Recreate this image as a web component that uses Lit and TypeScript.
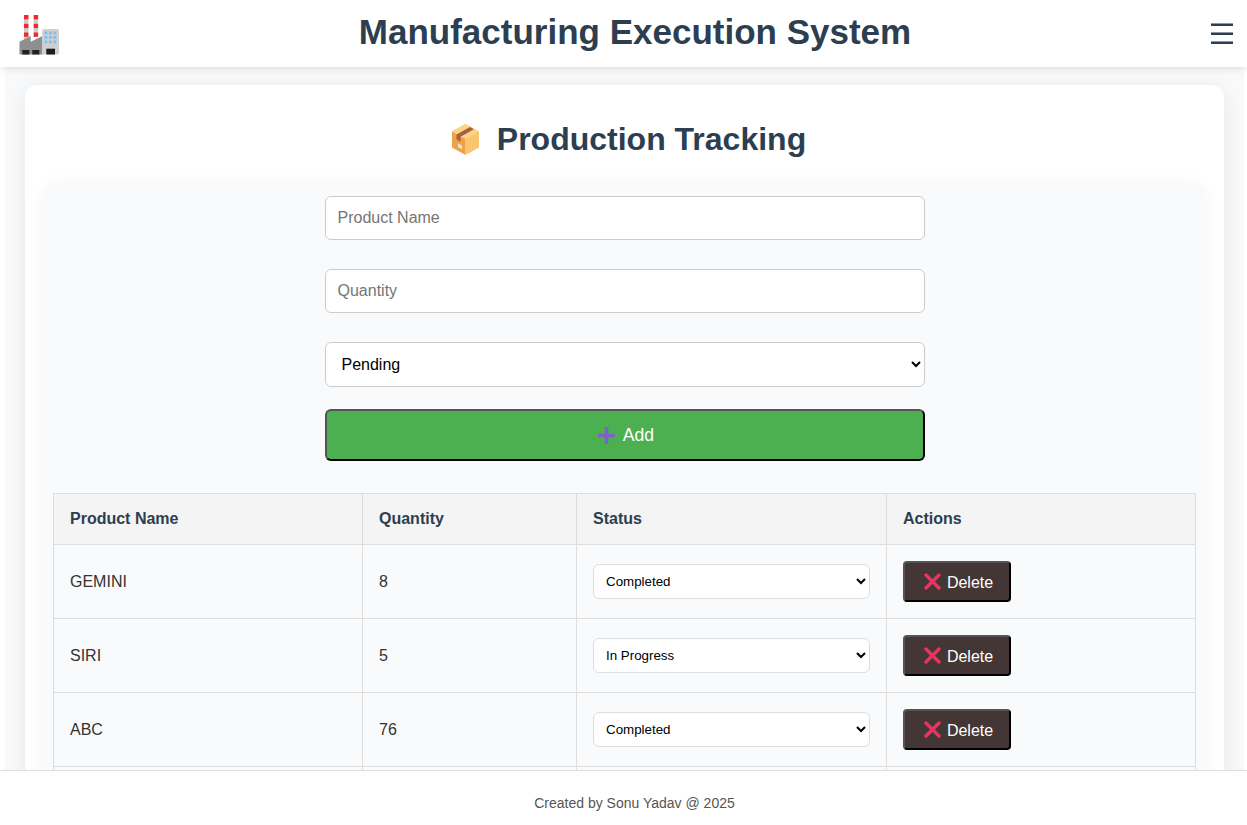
import { LitElement, css, html, svg } from "lit";
import { customElement, state } from "lit/decorators.js";

const factoryIcon = svg`
  <rect x="4" y="0" width="4.4" height="25" fill="#cdcdcd" />
  <rect x="13.7" y="0" width="4.4" height="22" fill="#cdcdcd" />
  <g fill="#f4272b">
    <rect x="4" y="0" width="4.4" height="4.3" /><rect x="4" y="8.8" width="4.4" height="4.3" /><rect x="4" y="17.5" width="4.4" height="4.3" />
    <rect x="13.7" y="0" width="4.4" height="4.3" /><rect x="13.7" y="8.8" width="4.4" height="4.3" /><rect x="13.7" y="17.5" width="4.4" height="4.3" />
  </g>
  <path d="M-.5 39.5V26.7L10.7 21v5.7L22.5 21v18.5z" fill="#8f8f8f" />
  <rect x="2.3" y="35" width="7" height="4.5" fill="#222" />
  <rect x="12.3" y="35" width="7" height="4.5" fill="#222" />
  <rect x="22.3" y="14" width="16.7" height="25.5" rx="1.5" fill="#d0d0d0" />
  <g fill="#7fbdf2">
    <rect x="24.5" y="16.5" width="2.8" height="2.8" /><rect x="29" y="16.5" width="2.8" height="2.8" /><rect x="33.5" y="16.5" width="2.8" height="2.8" />
    <rect x="24.5" y="21" width="2.8" height="2.8" /><rect x="29" y="21" width="2.8" height="2.8" /><rect x="33.5" y="21" width="2.8" height="2.8" />
    <rect x="24.5" y="25.5" width="2.8" height="2.8" /><rect x="29" y="25.5" width="2.8" height="2.8" /><rect x="33.5" y="25.5" width="2.8" height="2.8" />
  </g>
  <rect x="26.3" y="33.7" width="8.7" height="5.8" fill="#1d1d1d" />
`;

const boxIcon = svg`
  <path d="M15.5 1 29 8.5v16L15.5 32z" fill="#fbc56f" />
  <path d="M15.5 1 2 8.5v16L15.5 32z" fill="#eda24a" />
  <path d="M2 8.5 15.5 1 29 8.5 15.5 16z" fill="#fdd28a" />
  <path d="M6.500 11.5 20 4 24 6.2 10.5 13.7v5L6.5 16.5z" fill="#a5623f" />
  <path d="M8 24l4 2.2v-3.6L8 20.5z" fill="#e9e3da" />
`;

const plusIcon = svg`<path d="M8.5 1v15M1 8.5h15" stroke="#7d61c9" stroke-width="3.6" stroke-linecap="round" fill="none" />`;
const crossIcon = svg`<path d="M2 2l13 13M15 2 2 15" stroke="#f0315f" stroke-width="3.4" stroke-linecap="round" fill="none" />`;

interface Product {
  name: string;
  quantity: number;
  status: string;
}

const statuses = ["Pending", "In Progress", "Completed"];

@customElement("app-root")
export class AppRoot extends LitElement {
  @state()
  private products: Product[] = [
    { name: "GEMINI", quantity: 8, status: "Completed" },
    { name: "SIRI", quantity: 5, status: "In Progress" },
    { name: "ABC", quantity: 76, status: "Completed" },
    { name: "XYZ", quantity: 12, status: "Pending" },
  ];

  private statusOptions(selected: string) {
    return statuses.map(
      (s) => html`<option ?selected=${s === selected}>${s}</option>`
    );
  }

  render() {
    return html`
      <header class="topbar">
        <svg class="logo" viewBox="0 0 40 40">${factoryIcon}</svg>
        <h1>Manufacturing Execution System</h1>
        <button class="menu" aria-label="Menu">
          <span></span><span></span><span></span>
        </button>
      </header>
      <main class="page">
        <section class="card">
          <h2>
            <svg class="box" viewBox="0 0 31 33">${boxIcon}</svg>
            Production Tracking
          </h2>
          <div class="panel">
            <div class="form">
              <input type="text" placeholder="Product Name" />
              <input type="number" placeholder="Quantity" />
              <select class="status-main">${this.statusOptions("Pending")}</select>
              <button class="add">
                <svg viewBox="0 0 17 17">${plusIcon}</svg>Add
              </button>
            </div>
            <table>
              <colgroup>
                <col class="c1" /><col class="c2" /><col class="c3" /><col class="c4" />
              </colgroup>
              <thead>
                <tr>
                  <th>Product Name</th>
                  <th>Quantity</th>
                  <th>Status</th>
                  <th>Actions</th>
                </tr>
              </thead>
              <tbody>
                ${this.products.map(
                  (p) => html`
                    <tr>
                      <td>${p.name}</td>
                      <td>${p.quantity}</td>
                      <td>
                        <select class="status-row">${this.statusOptions(p.status)}</select>
                      </td>
                      <td>
                        <button class="delete">
                          <svg viewBox="0 0 17 17">${crossIcon}</svg>Delete
                        </button>
                      </td>
                    </tr>
                  `
                )}
              </tbody>
            </table>
          </div>
        </section>
      </main>
      <footer>Created by Sonu Yadav @ 2025</footer>
    `;
  }

  static styles = css`
    :host {
      display: block;
      height: 100vh;
      overflow: hidden;
      position: relative;
      background: #fff;
      font-family: "Liberation Sans", Arial, sans-serif;
      color: #2c3e50;
    }
    .topbar {
      height: 67px;
      box-sizing: border-box;
      display: flex;
      align-items: center;
      justify-content: space-between;
      padding: 0 14px 3px 20px;
      background: #fff;
      box-shadow: 0 2px 8px rgba(0, 0, 0, 0.1);
      position: relative;
      z-index: 2;
    }
    .logo {
      width: 40px;
      height: 40px;
      margin-top: 6px;
      overflow: visible;
    }
    h1 {
      margin: 0 1px 0 0;
      font-size: 35px;
      font-weight: 700;
    }
    .menu {
      width: 22px;
      height: 21px;
      margin-top: 3px;
      padding: 0;
      border: 0;
      background: none;
      display: flex;
      flex-direction: column;
      justify-content: space-between;
    }
    .menu span {
      display: block;
      height: 3px;
      background: linear-gradient(#8d98a3 33%, #2c3e50 33%);
    }
    .page {
      margin: 0 3px 0 5px;
      padding: 18px 20px;
      background: #f8f9fa;
    }
    .card {
      background: #fff;
      border-radius: 12px;
      box-shadow: 0 4px 20px rgba(0, 0, 0, 0.08);
      padding: 20px;
    }
    h2 {
      margin: 16px 0 24px;
      padding-left: 7px;
      display: flex;
      align-items: center;
      justify-content: center;
      gap: 16px;
      font-size: 32px;
      line-height: 37px;
    }
    .box {
      width: 31px;
      height: 33px;
    }
    .panel {
      background: #f9fafc;
      border-radius: 10px;
      box-shadow: 0 4px 20px rgba(0, 0, 0, 0.05);
      padding: 14px 8px 20px;
    }
    .form {
      width: 600px;
      margin: 0 auto 32px;
      display: flex;
      flex-direction: column;
    }
    input,
    .status-main {
      box-sizing: border-box;
      width: 100%;
      height: 44px;
      padding: 12px;
      font: 16px "Liberation Sans", Arial, sans-serif;
      border: 1px solid #ccc;
      border-radius: 6px;
      background: #fff;
      margin-bottom: 29px;
    }
    .status-main {
      height: 45px;
      margin-bottom: 22px;
    }
    .add {
      height: 52px;
      padding: 1px 0 0 3px;
      background: #4caf50;
      color: #fff;
      border-radius: 6px;
      font: 17.6px "Liberation Sans", Arial, sans-serif;
      display: flex;
      align-items: center;
      justify-content: center;
      gap: 8px;
    }
    .add svg {
      width: 17px;
      height: 17px;
    }
    table {
      width: 1142px;
      table-layout: fixed;
      border-collapse: collapse;
      font-size: 16px;
    }
    .c1 { width: 309px; }
    .c2 { width: 214px; }
    .c3 { width: 310px; }
    .c4 { width: 309px; }
    th,
    td {
      border: 1px solid #ddd;
      padding: 0 16px;
      text-align: left;
      height: 74px;
      box-sizing: border-box;
    }
    th {
      height: 51px;
      background: #f4f4f4;
      font-weight: 700;
    }
    td {
      color: #333;
    }
    .status-row {
      box-sizing: border-box;
      width: 100%;
      height: 35px;
      padding: 0 8px;
      font: 13.333px "Liberation Sans", Arial, sans-serif;
      border: 1px solid #ddd;
      border-radius: 6px;
      background: #fff;
    }
    .delete {
      height: 41px;
      width: 108px;
      padding: 2px 0 0 3px;
      background: #453636;
      color: #fff;
      border-radius: 4px;
      font: 16px "Liberation Sans", Arial, sans-serif;
      display: flex;
      align-items: center;
      justify-content: center;
      gap: 6px;
    }
    .delete svg {
      width: 17px;
      height: 17px;
      margin-top: -2px;
    }
    footer {
      position: absolute;
      left: 0;
      right: 0;
      bottom: 0;
      height: 55px;
      box-sizing: border-box;
      padding: 10px 0 0 22px;
      border-top: 1px solid #ddd;
      background: #fff;
      display: flex;
      align-items: center;
      justify-content: center;
      font-size: 14px;
      color: #555;
      z-index: 3;
    }
  `;
}

declare global {
  interface HTMLElementTagNameMap {
    "app-root": AppRoot;
  }
}
